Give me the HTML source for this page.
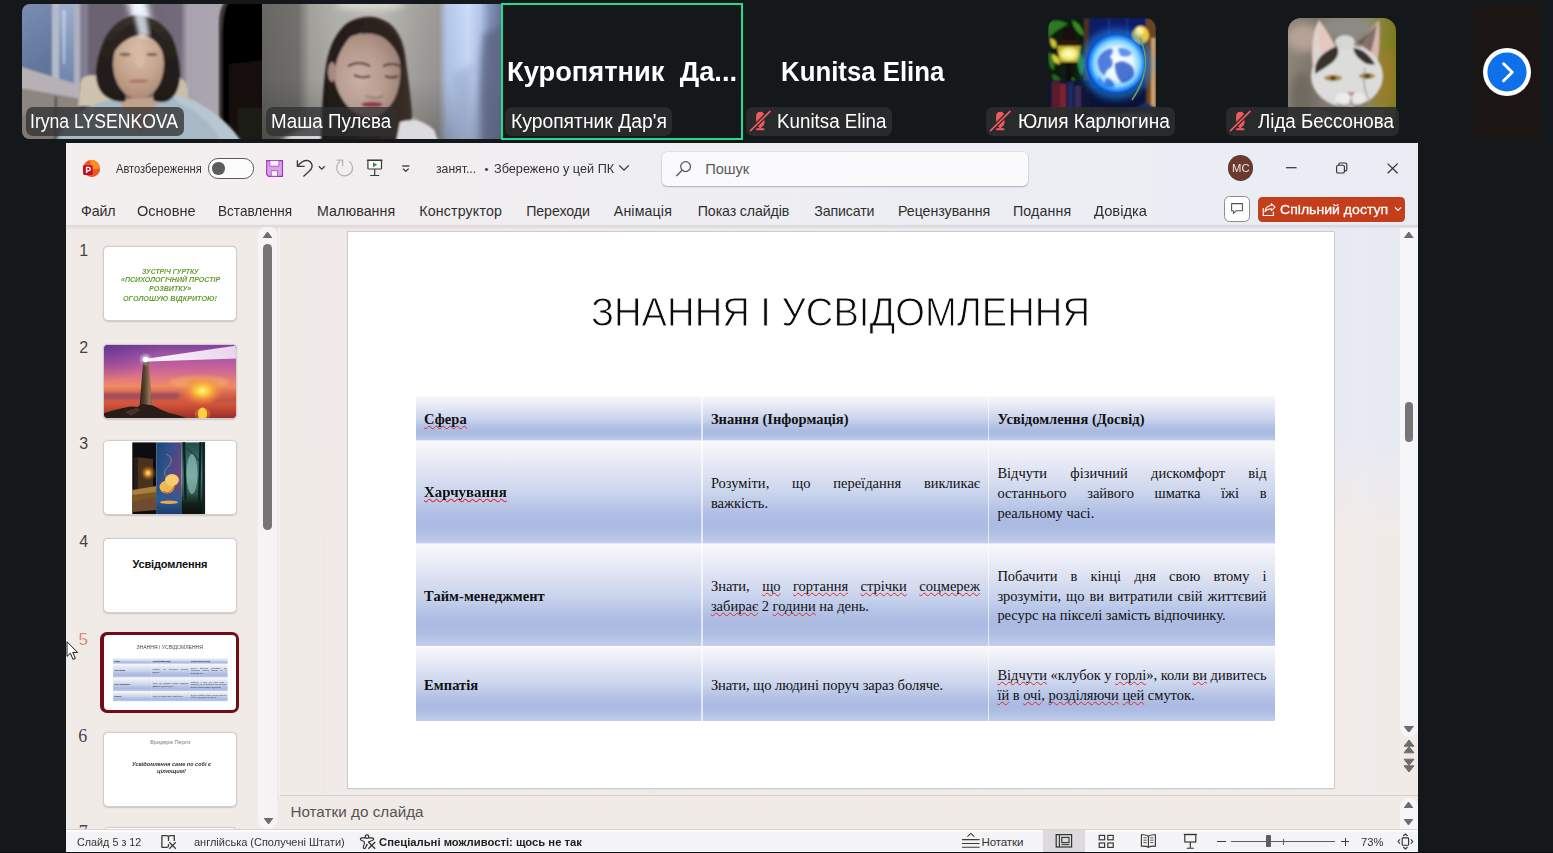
<!DOCTYPE html>
<html lang="uk">
<head>
<meta charset="utf-8">
<title>Zoom Meeting</title>
<style>
*{box-sizing:border-box;margin:0;padding:0}
html,body{width:1553px;height:853px;overflow:hidden;background:#14181b;font-family:"Liberation Sans",sans-serif}
#root{position:absolute;left:0;top:0;width:1553px;height:853px;overflow:hidden;background:#14181b}
.abs{position:absolute}
.t{position:absolute;white-space:pre;line-height:1;transform-origin:0 50%}
.t u{text-decoration:underline wavy #e0282e;text-decoration-thickness:.55px;text-underline-offset:1.4px;text-decoration-skip-ink:none}
.lbl{position:absolute;top:106.5px;height:29.4px;border-radius:7px;background:rgba(48,48,49,.77)}
.thumb{position:absolute;left:103.3px;width:133.4px;height:75px;background:#fff;border:1px solid #d3cccc;border-radius:5px;overflow:hidden;box-shadow:0 .5px 1.5px rgba(80,60,60,.22)}
</style>
</head>
<body>
<div id="root">
<!-- ===== VIDEO STRIP ===== -->
<svg class="abs" style="left:22px;top:4px" width="240" height="135" viewBox="0 0 240 135">
<defs>
<filter id="b1" x="-10%" y="-10%" width="120%" height="120%"><feGaussianBlur stdDeviation="1.1"/></filter>
<filter id="b2" x="-10%" y="-10%" width="120%" height="120%"><feGaussianBlur stdDeviation="2.2"/></filter>
<filter id="b3" x="-20%" y="-20%" width="140%" height="140%"><feGaussianBlur stdDeviation="3.6"/></filter>
<clipPath id="c1"><path d="M9 0H240V135H9Q0 135 0 126V9Q0 0 9 0Z"/></clipPath>
<linearGradient id="w1" x1="0" x2="1"><stop offset="0" stop-color="#6a6371"/><stop offset=".45" stop-color="#6b6372"/><stop offset=".66" stop-color="#746c7c"/><stop offset=".69" stop-color="#a7a2ae"/><stop offset="1" stop-color="#b0abb7"/></linearGradient>
<linearGradient id="win" x1="0" y1="0" x2=".3" y2="1"><stop offset="0" stop-color="#7c90b6"/><stop offset="1" stop-color="#61759a"/></linearGradient>
<linearGradient id="win2" x1="0" y1="0" x2="0" y2="1"><stop offset="0" stop-color="#9fb1cf"/><stop offset=".5" stop-color="#8499bd"/><stop offset="1" stop-color="#6d84ab"/></linearGradient>
<radialGradient id="fc1" cx=".5" cy=".3" r=".75"><stop offset="0" stop-color="#d9bda8"/><stop offset=".55" stop-color="#c6a58f"/><stop offset="1" stop-color="#a98672"/></radialGradient>
<linearGradient id="hr1" x1="0" y1="0" x2="0" y2="1"><stop offset="0" stop-color="#3a332e"/><stop offset=".35" stop-color="#26211e"/><stop offset="1" stop-color="#1f1b18"/></linearGradient>
</defs>
<g clip-path="url(#c1)">
<rect width="240" height="135" fill="url(#w1)"/>
<g filter="url(#b1)">
<path d="M-4 -4 H31 V74 L-4 63Z" fill="url(#win)"/>
<path d="M30 -4 H37 V76 L30 74Z" fill="#b4b9cb"/>
<path d="M37 -4 H53 V81 L37 76Z" fill="url(#win2)"/>
<path d="M40 6 L44 6 L43 60 L41 60Z" fill="#c9d4e6" opacity=".7"/>
<path d="M52 -4 H58 V84 L52 81Z" fill="#aeb0c0"/>
<path d="M58 -4 H66 V90 L58 84Z" fill="#827d90"/>
<path d="M-4 62 L58 81 L58 95 L-4 84Z" fill="#b5b1b4"/>
<path d="M-4 84 L58 95 L58 140 L-4 140Z" fill="#8c8580"/>
<path d="M-4 110 L40 118 L40 140 L-4 140Z" fill="#7f7873"/>
<path d="M33 92 L35 92 L34 140 L32 140Z" fill="#4a4540"/>
<path d="M196 -4 H244 V140 H200 V28 Q200 6 207 -4Z" fill="#050505"/>
<path d="M207 60 L244 56 V140 H207Z" fill="#120f0c"/>
<path d="M216 104 H244 V140 H216Z" fill="#1f1b16"/>
<path d="M197 20 Q197 4 204 -4 L207 -4 Q200 8 200 28 V140 H197Z" fill="#3b3631"/>
</g>
<g filter="url(#b3)"><path d="M104 -8 L124 -8 L130 26 L114 30Z" fill="#f4f7ff"/></g>
<g filter="url(#b1)">
<path d="M58 82 Q58 71 70 71 Q84 72 88 80 L92 102 L56 102Z" fill="#cec4ae"/>
<path d="M152 74 Q164 72 166 86 L166 96 L150 98Z" fill="#c9bfa9"/>
<path d="M34 139 Q46 106 84 97 L150 92 Q166 92 178 100 Q206 116 220 139Z" fill="#a6b9c4"/>
<path d="M150 92 Q166 92 178 100 Q206 116 220 139 H200 Q186 112 158 100Z" fill="#b7c6d0"/>
<path d="M96 95 L117 132 L139 93Z" fill="#c2a18c"/>
<path d="M115 11 Q95 13 83 34 Q74 54 74 72 Q75 90 90 96 Q98 99 104 97 L100 70 L100 40 L130 38 L134 70 L131 96 Q138 100 146 97 Q158 90 158 70 Q157 50 150 33 Q138 13 115 11Z" fill="url(#hr1)"/>
<ellipse cx="116.500" cy="60" rx="25.5" ry="35" fill="url(#fc1)"/>
<path d="M91 50 Q92 30 106 22 Q114 18 118 24 Q128 20 138 32 Q142 42 142 52 Q136 34 120 31 Q102 32 91 50Z" fill="#2a2420"/>
<ellipse cx="118" cy="57" rx="5" ry="7" fill="#dcb9a3"/>
<ellipse cx="103" cy="50.500" rx="5.5" ry="1.7" fill="#66574a" opacity=".85"/>
<ellipse cx="130" cy="50.500" rx="5.5" ry="1.7" fill="#66574a" opacity=".85"/>
<ellipse cx="116.500" cy="77" rx="10" ry="2.1" fill="#b4776a"/>
</g>
<g filter="url(#b2)"><path d="M111 6 L123 6 L128 32 L117 34Z" fill="#e9f0fb" opacity=".8"/></g>
</g></svg>
<svg class="abs" style="left:262px;top:4px" width="240" height="135" viewBox="0 0 240 135">
<defs>
<linearGradient id="w2" x1="0" x2="1"><stop offset="0" stop-color="#696763"/><stop offset=".15" stop-color="#73716d"/><stop offset=".2" stop-color="#a3a19c"/><stop offset=".32" stop-color="#b3b1ac"/><stop offset=".5" stop-color="#b9b7b2"/><stop offset=".66" stop-color="#a3a19d"/><stop offset=".735" stop-color="#9b9a98"/><stop offset=".77" stop-color="#b4c7ea"/><stop offset=".86" stop-color="#cbdcf9"/><stop offset=".91" stop-color="#b3c5ea"/><stop offset=".95" stop-color="#8190b6"/><stop offset="1" stop-color="#67708d"/></linearGradient>
<linearGradient id="sh2" x1="0" y1="0" x2="0" y2="1"><stop offset="0" stop-color="#000" stop-opacity="0"/><stop offset=".55" stop-color="#000" stop-opacity=".04"/><stop offset="1" stop-color="#000" stop-opacity=".26"/></linearGradient>
<radialGradient id="fc2" cx=".4" cy=".55" r=".7"><stop offset="0" stop-color="#c9b0a6"/><stop offset=".6" stop-color="#b3978b"/><stop offset="1" stop-color="#96796e"/></radialGradient>
<linearGradient id="hr2" x1="0" x2="1"><stop offset="0" stop-color="#1e1815"/><stop offset=".6" stop-color="#2c231f"/><stop offset="1" stop-color="#3a2f2a"/></linearGradient>
</defs>
<rect width="240" height="135" fill="url(#w2)"/>
<rect width="240" height="135" fill="url(#sh2)"/>
<g filter="url(#b3)">
<ellipse cx="108" cy="0" rx="34" ry="7" fill="#d6d5cf"/>
<path d="M222 30 Q214 80 220 140 L244 140 L244 20Z" fill="#5d6682" opacity=".8"/>
<path d="M190 70 Q198 100 192 140 L214 140 Q206 100 212 60Z" fill="#93a5cc" opacity=".55"/>
</g>
<g filter="url(#b2)">
<path d="M16 139 Q50 112 100 110 L140 112 Q168 118 176 139Z" fill="#d8d5d7"/>
</g>
<g filter="url(#b1)">
<path d="M59 139 Q60 96 63 70 Q66 36 84 20 Q100 10 116 14 Q138 20 143 50 Q147 78 150 108 Q150 124 146 139Z" fill="url(#hr2)"/>
<path d="M70 60 Q72 40 90 32 Q104 26 118 30 Q134 36 138 58 Q140 80 132 96 Q122 112 108 114 Q92 112 82 98 Q72 84 70 60Z" fill="url(#fc2)"/>
<path d="M66 84 Q62 44 88 23 Q98 17 104 17 Q92 27 84 38 Q76 50 74 60 Q71 70 71 86Z" fill="#261e1a"/>
<path d="M104 17 Q126 18 136 36 Q142 50 141 66 Q136 44 122 34 Q112 28 100 30Z" fill="#2b221e"/>
<ellipse cx="70" cy="68" rx="4" ry="10" fill="#a88a7e"/>
<path d="M86 62 Q97 56 108 62" stroke="#4b3b34" stroke-width="2.1" fill="none"/>
<path d="M121 62 Q130 58 138 62" stroke="#4b3b34" stroke-width="2.1" fill="none"/>
<path d="M92 71 Q100 75 108 72" stroke="#4a3932" stroke-width="2" fill="none"/>
<path d="M123 72 Q130 75 136 72" stroke="#4a3932" stroke-width="2" fill="none"/>
<ellipse cx="113" cy="88" rx="6" ry="5" fill="#c0a397"/>
<path d="M104 92 Q113 96 121 92" stroke="#8e7266" stroke-width="1.4" fill="none"/>
<ellipse cx="110" cy="100.500" rx="10.5" ry="2.7" fill="#8c3b4d"/>
<path d="M138 118 Q156 112 172 126 L176 139 H134Z" fill="#dddbdd"/>
</g>
</svg>
<div class="lbl" style="left:25.7px;width:158.3px"></div><span class="t" style="left:30.4px;top:111.0px;font-size:20px;color:#fff;transform:scaleX(0.8798);">Iryna LYSENKOVA</span><div class="lbl" style="left:266px;width:130px"></div><span class="t" style="left:270.6px;top:111.0px;font-size:20px;color:#fff;transform:scaleX(0.9377);">Маша Пулєва</span><div class="abs" style="left:500.7px;top:3px;width:242.6px;height:137px;border:2.9px solid #23dc8c"></div><span class="t" style="left:506.8px;top:57.7px;font-size:28px;font-weight:700;color:#fff;transform:scaleX(0.9748);">Куропятник&nbsp; Да...</span><div class="lbl" style="left:505.4px;width:166.3px"></div><span class="t" style="left:510.6px;top:111.0px;font-size:20px;color:#fff;transform:scaleX(0.9655);">Куропятник Дар'я</span><span class="t" style="left:780.7px;top:57.7px;font-size:28px;font-weight:700;color:#fff;transform:scaleX(0.9211);">Kunitsa Elina</span><div class="lbl" style="left:745.9px;width:145.8px"></div><svg class="abs" style="left:748.9px;top:110px" width="24" height="22" viewBox="0 0 24 22">
<rect x="7.1" y="1.8" width="8.4" height="15.2" rx="4.2" fill="#f25a5f"/>
<rect x="10.2" y="16" width="2.2" height="2.6" fill="#f25a5f"/>
<rect x="7.1" y="18.3" width="8.2" height="1.9" rx=".5" fill="#f25a5f"/>
<path d="M1.6 20.6 L21 1.3" stroke="#26282a" stroke-width="4.2"/>
<path d="M1.6 20.6 L21 1.3" stroke="#f25a5f" stroke-width="1.7" stroke-linecap="round"/>
</svg><span class="t" style="left:777.3px;top:111.0px;font-size:20px;color:#fff;transform:scaleX(0.9379);">Kunitsa Elina</span><svg class="abs" style="left:1048px;top:18px" width="108" height="108" viewBox="0 0 108 108">
<defs>
<clipPath id="c5"><rect width="108" height="108" rx="11"/></clipPath>
<radialGradient id="gl5" cx=".52" cy=".5" r=".5"><stop offset="0" stop-color="#ffffff"/><stop offset=".55" stop-color="#e4f6ff"/><stop offset=".78" stop-color="#7fd0ff"/><stop offset=".92" stop-color="#1f86f5"/><stop offset="1" stop-color="#0b4fd0"/></radialGradient>
<radialGradient id="la5" cx=".5" cy=".5" r=".5"><stop offset="0" stop-color="#fffde0"/><stop offset=".6" stop-color="#f4ee7a"/><stop offset="1" stop-color="#b7a92a"/></radialGradient>
<filter id="f5"><feGaussianBlur stdDeviation="1.1"/></filter>
<filter id="f5b"><feGaussianBlur stdDeviation="3"/></filter>
</defs>
<g clip-path="url(#c5)">
<rect width="108" height="108" fill="#0a123a"/>
<g filter="url(#f5)">
<rect x="42" y="0" width="60" height="70" fill="#0c1c66"/>
<rect x="60" y="0" width="2" height="60" fill="#1c2f86"/><rect x="78" y="0" width="2" height="60" fill="#1c2f86"/>
<rect x="36" y="0" width="5" height="108" fill="#4a3020"/>
<rect x="0" y="0" width="36" height="62" fill="#0d1a10"/>
<path d="M0 4 Q10 0 20 6 Q8 12 0 20Z" fill="#2f7a22"/><path d="M24 2 Q34 6 36 18 Q26 14 24 2Z" fill="#3a8a26"/>
<path d="M0 34 Q8 38 6 52 Q0 50 0 34Z" fill="#2d7a20"/><path d="M30 34 Q40 40 34 58 Q28 50 30 34Z" fill="#2f8a24"/>
<path d="M4 56 Q14 58 16 72 Q6 70 4 56Z" fill="#2a6a1e"/><path d="M22 58 Q32 62 30 76 Q22 70 22 58Z" fill="#33801f"/>
<path d="M2 20 Q10 22 8 30 Q2 30 2 20Z" fill="#d0c43a"/><path d="M4 36 Q12 38 12 46 Q4 46 4 36Z" fill="#d8cc40"/>
<rect x="0" y="62" width="42" height="46" fill="#0e1230"/>
<rect x="4" y="64" width="8" height="44" fill="#5a1a2a"/><rect x="12" y="66" width="6" height="42" fill="#7a2430"/><rect x="20" y="64" width="5" height="44" fill="#1a2a6a"/><rect x="27" y="68" width="6" height="40" fill="#3a2a5a"/>
<rect x="98" y="0" width="10" height="108" fill="#6a4522"/><rect x="103" y="20" width="5" height="80" fill="#c9a06a"/>
<path d="M12 22 L30 22 L32 28 L10 28Z" fill="#2a1410"/><path d="M16 12 Q21 6 26 12 L28 22 L14 22Z" fill="#1a0d0a"/>
<path d="M9 28 L33 28 L30 44 L12 44Z" fill="url(#la5)"/>
<rect x="18" y="44" width="6" height="20" fill="#10100c"/>
<path d="M84 16 Q90 4 98 10 Q104 18 98 24 Q92 28 86 24Z" fill="#f5c93a"/><path d="M88 10 Q94 6 96 14 Q92 20 88 16Z" fill="#fff2a0"/>
<path d="M48 90 Q70 102 98 84 L108 90 L108 108 L40 108Z" fill="#14306a"/>
<rect x="42" y="98" width="30" height="8" fill="#7aa0c8"/><rect x="74" y="96" width="30" height="10" fill="#90b0d0"/>
<path d="M62 104 L70 96 L78 104Z" fill="#c9a030"/>
</g>
<circle cx="68" cy="46" r="36" fill="#1d8cf5" opacity=".55" filter="url(#f5b)"/>
<path d="M92 20 Q106 50 84 82" fill="none" stroke="#7a9a50" stroke-width="1.6"/>
<circle cx="67.600" cy="45.500" r="29.5" fill="url(#gl5)"/>
<g filter="url(#f5)" opacity=".72" transform="translate(10,8) scale(.86)">
<path d="M46 40 Q50 28 62 26 Q66 30 60 36 Q66 40 62 48 Q56 50 54 58 Q46 52 46 40Z" fill="#1450d2"/>
<path d="M66 44 Q74 38 82 44 Q90 48 88 58 Q82 66 74 66 Q66 58 66 44Z" fill="#0f3fc0"/>
<path d="M56 60 Q64 62 66 70 Q60 74 54 68Z" fill="#1a55d8"/>
<path d="M70 26 Q80 24 86 32 Q80 38 72 34Z" fill="#2a6ae8"/>
<path d="M48 58 Q52 66 60 72 Q52 72 46 64Z" fill="#2a78f0"/>
</g>
</g></svg>
<div class="abs" style="left:1048px;top:106.5px;width:108px;height:20px;background:rgba(20,24,27,.6)"></div><div class="lbl" style="left:985.8px;width:189.4px"></div><svg class="abs" style="left:988.8px;top:110px" width="24" height="22" viewBox="0 0 24 22">
<rect x="7.1" y="1.8" width="8.4" height="15.2" rx="4.2" fill="#f25a5f"/>
<rect x="10.2" y="16" width="2.2" height="2.6" fill="#f25a5f"/>
<rect x="7.1" y="18.3" width="8.2" height="1.9" rx=".5" fill="#f25a5f"/>
<path d="M1.6 20.6 L21 1.3" stroke="#26282a" stroke-width="4.2"/>
<path d="M1.6 20.6 L21 1.3" stroke="#f25a5f" stroke-width="1.7" stroke-linecap="round"/>
</svg><span class="t" style="left:1017.6px;top:111.0px;font-size:20px;color:#fff;transform:scaleX(0.9543);">Юлия Карлюгина</span><svg class="abs" style="left:1288px;top:18px" width="108" height="108" viewBox="0 0 108 108">
<defs>
<clipPath id="c6"><rect width="108" height="108" rx="13"/></clipPath>
<linearGradient id="bg6" x1="0" x2="1"><stop offset="0" stop-color="#8f8579"/><stop offset=".25" stop-color="#7d766c"/><stop offset=".62" stop-color="#8b867c"/><stop offset=".84" stop-color="#8a8438"/><stop offset="1" stop-color="#7a7c1c"/></linearGradient>
<filter id="f6"><feGaussianBlur stdDeviation="1.2"/></filter>
<filter id="f6b"><feGaussianBlur stdDeviation="4"/></filter>
</defs>
<g clip-path="url(#c6)">
<rect width="108" height="108" fill="url(#bg6)"/>
<g filter="url(#f6b)">
<ellipse cx="16" cy="20" rx="18" ry="14" fill="#b5a396"/>
<ellipse cx="60" cy="10" rx="30" ry="10" fill="#8d8b86"/>
<ellipse cx="98" cy="60" rx="10" ry="30" fill="#a07a2a" opacity=".7"/>
<ellipse cx="14" cy="80" rx="12" ry="26" fill="#6f6a60"/>
</g>
<g filter="url(#f6)" transform="translate(-1,-10)">
<path d="M26 62 Q22 30 32 12 Q44 28 50 42Z" fill="#e7c6bf"/>
<path d="M72 42 Q82 22 92 12 Q94 34 90 58Z" fill="#d8b6b0"/>
<path d="M28 60 Q24 34 32 12 Q30 36 36 50Z" fill="#d9d6d2"/>
<ellipse cx="60" cy="68" rx="36" ry="31" fill="#dcdcda"/>
<ellipse cx="58" cy="34" rx="10" ry="7" fill="#d6d6d4"/>
<path d="M28 60 Q30 46 50 38 Q54 46 46 54 Q38 60 28 66Z" fill="#37302b"/>
<path d="M66 40 Q78 40 88 56 Q80 58 74 52 Q68 48 66 40Z" fill="#3a332e"/>
<path d="M70 34 Q80 28 90 16 Q88 30 84 44Z" fill="#4a403b" opacity=".6"/>
<ellipse cx="46" cy="70" rx="9" ry="3" fill="#a9873a"/><ellipse cx="46" cy="70" rx="3" ry="2.6" fill="#5a4520"/>
<ellipse cx="80" cy="68" rx="8" ry="3" fill="#a9873a"/><ellipse cx="80" cy="68" rx="3" ry="2.6" fill="#5a4520"/>
<path d="M60 84 L68 84 L64 90Z" fill="#b99088"/>
<path d="M64 90 V96 M50 96 Q58 100 64 96 Q70 100 80 94" stroke="#6a605a" stroke-width="1.2" fill="none"/>
<path d="M78 60 Q74 80 84 96 Q78 104 72 108" stroke="#8a8680" stroke-width="1" fill="none"/>
<ellipse cx="56" cy="90" rx="8" ry="5" fill="#ececea"/><ellipse cx="72" cy="90" rx="7" ry="5" fill="#e8e8e6"/>
<path d="M24 100 Q60 114 96 100 L100 120 L20 120Z" fill="#bdbab2"/>
</g>
</g></svg>
<div class="abs" style="left:1288px;top:106.5px;width:108px;height:20px;background:rgba(20,24,27,.6)"></div><div class="lbl" style="left:1226px;width:172.8px"></div><svg class="abs" style="left:1229px;top:110px" width="24" height="22" viewBox="0 0 24 22">
<rect x="7.1" y="1.8" width="8.4" height="15.2" rx="4.2" fill="#f25a5f"/>
<rect x="10.2" y="16" width="2.2" height="2.6" fill="#f25a5f"/>
<rect x="7.1" y="18.3" width="8.2" height="1.9" rx=".5" fill="#f25a5f"/>
<path d="M1.6 20.6 L21 1.3" stroke="#26282a" stroke-width="4.2"/>
<path d="M1.6 20.6 L21 1.3" stroke="#f25a5f" stroke-width="1.7" stroke-linecap="round"/>
</svg><span class="t" style="left:1257.5px;top:111.0px;font-size:20px;color:#fff;transform:scaleX(0.9351);">Ліда Бессонова</span><div class="abs" style="left:1474px;top:4px;width:66px;height:135px;background:#1b1614"></div><svg class="abs" style="left:1481px;top:46px" width="52" height="52" viewBox="0 0 52 52"><circle cx="26" cy="26" r="24" fill="#fff"/><circle cx="26" cy="26" r="19.6" fill="#0e71eb"/><path d="M22.6 17.8 L31.2 26.2 L22.6 34.8" fill="none" stroke="#fff" stroke-width="3" stroke-linecap="round" stroke-linejoin="round"/></svg><!-- ===== POWERPOINT WINDOW CHROME ===== -->
<div class="abs" id="win" style="left:66px;top:143px;width:1352px;height:710px;background:#f1ebe8"></div><div class="abs" style="left:66px;top:143px;width:1352px;height:84px;background:linear-gradient(90deg,#f4efef 0%,#f2eeef 22%,#efeef2 42%,#eceef4 72%,#e9ecf3 100%)"></div><div class="abs" style="left:66px;top:224px;width:1352px;height:6px;background:linear-gradient(180deg,rgba(110,100,110,0) 0%,rgba(110,100,110,.05) 18%,rgba(110,100,110,.2) 30%,rgba(110,100,110,.1) 50%,rgba(110,100,110,.03) 80%,rgba(110,100,110,0) 100%)"></div><svg class="abs" style="left:81px;top:158px" width="22" height="22" viewBox="0 0 22 22">
<circle cx="10.5" cy="10.4" r="8.5" fill="#ee4e2a"/>
<path d="M9.4 1.97 A8.5 8.5 0 0 1 19 10.4 L15 12.4 L9.4 9.4Z" fill="#ff8f1f"/>
<path d="M19 10.4 A8.5 8.5 0 0 1 10.5 18.9 L10.5 12 L15 11Z" fill="#f0552a"/>
<rect x="2.1" y="7.2" width="9.5" height="9.7" rx="1.1" fill="#c10f22"/>
<path d="M5.6 14.9 V9.4 H7.5 Q9.3 9.4 9.3 11.1 Q9.3 12.8 7.5 12.8 H5.9" fill="none" stroke="#fff" stroke-width="1.35"/>
</svg><span class="t" style="left:115.6px;top:162.6px;font-size:12px;color:#333;transform:scaleX(0.9270);">Автозбереження</span><div class="abs" style="left:208.4px;top:158.4px;width:45.4px;height:20.2px;border:1.1px solid #5a5a5c;border-radius:10.1px;background:#fdfcfd"></div><div class="abs" style="left:212.2px;top:162.3px;width:12.4px;height:12.4px;border-radius:50%;background:#5c5b5e"></div><svg class="abs" style="left:265px;top:159px" width="20" height="20" viewBox="0 0 20 20">
<path d="M1.7 1.6 H17.5 V17.4 H3.6 L1.7 15.5Z" fill="#d9a2e3" stroke="#9f2fbe" stroke-width="1.1"/>
<rect x="4.9" y="1.7" width="9" height="5.4" fill="#fbf6fc" stroke="#a849c4" stroke-width=".8"/>
<rect x="6.2" y="11.8" width="6.4" height="5.4" fill="#fbf6fc" stroke="#a849c4" stroke-width=".8"/>
</svg><svg class="abs" style="left:295px;top:158px" width="32" height="21" viewBox="0 0 32 21">
<path d="M2.4 2.2 V8.4 H9.6" fill="none" stroke="#3b3b3d" stroke-width="1.35"/>
<path d="M2.6 8.2 Q8 1.6 13 2.6 Q17.6 4.2 17 9 Q16.4 11.6 13.6 13.8 L8.4 18.6" fill="none" stroke="#3b3b3d" stroke-width="1.35"/>
<path d="M23.8 8.3 L26.8 11.2 L29.8 8.3" fill="none" stroke="#3b3b3d" stroke-width="1.3"/>
</svg><svg class="abs" style="left:334px;top:158px" width="22" height="21" viewBox="0 0 22 21">
<path d="M15.2 3.3 A8 8 0 1 1 6.2 3.2" fill="none" stroke="#b4b3b6" stroke-width="1.3"/>
<path d="M2.6 2.2 H8.6 V8.2" fill="none" stroke="#b4b3b6" stroke-width="1.3"/>
</svg><svg class="abs" style="left:366px;top:159px" width="18" height="18" viewBox="0 0 18 18">
<path d="M0.8 1.2 H16.6" stroke="#3b3b3d" stroke-width="1.2"/>
<rect x="1.9" y="1.4" width="13.6" height="8.6" rx=".8" fill="#fbfafb" stroke="#3b3b3d" stroke-width="1.2"/>
<path d="M7 3.2 L11.2 5.7 L7 8.2Z" fill="#1f9a3a"/>
<path d="M8.7 10 V16.4 M4.2 16.5 H13.2" stroke="#3b3b3d" stroke-width="1.2"/>
</svg><svg class="abs" style="left:401px;top:163px" width="10" height="11" viewBox="0 0 10 11"><path d="M1.2 3 H8.4" stroke="#333" stroke-width="1.3"/><path d="M2 5.6 L4.8 8.4 L7.6 5.6" fill="none" stroke="#333" stroke-width="1.3"/></svg><span class="t" style="left:435.9px;top:162.2px;font-size:13px;color:#333;transform:scaleX(0.9384);">занят...</span><span class="t" style="left:484.4px;top:163.9px;font-size:11px;color:#333;">•</span><span class="t" style="left:494.3px;top:161.9px;font-size:13.3px;color:#333;transform:scaleX(0.9545);">Збережено у цей ПК</span><svg class="abs" style="left:618px;top:163px" width="12" height="10" viewBox="0 0 12 10"><path d="M1.2 2.4 L6 7.2 L10.8 2.4" fill="none" stroke="#333" stroke-width="1.3"/></svg><div class="abs" style="left:661.5px;top:151.5px;width:366px;height:34px;border-radius:5px;background:#faf9fc;box-shadow:0 1px 1.5px rgba(90,80,100,.35),0 0 0 .6px rgba(120,110,130,.18)"></div><svg class="abs" style="left:675px;top:160px" width="18" height="18" viewBox="0 0 18 18"><circle cx="10.6" cy="6.6" r="4.9" fill="none" stroke="#555" stroke-width="1.25"/><path d="M7.2 10.2 L1.4 16" stroke="#555" stroke-width="1.3"/></svg><span class="t" style="left:705.2px;top:161.5px;font-size:14.7px;color:#5a5a5a;letter-spacing:-0.053px;">Пошук</span><div class="abs" style="left:1227.8px;top:155.4px;width:25.4px;height:25.4px;border-radius:50%;background:#6a392f"></div><span class="t" style="left:1231.8px;top:163.4px;font-size:10.5px;color:#f0e4e0;transform:scaleX(1.0741);">MC</span><svg class="abs" style="left:1280px;top:158px" width="124" height="20" viewBox="0 0 124 20">
<path d="M6 9.7 H16.6" stroke="#333" stroke-width="1.2"/>
<rect x="56.6" y="7.2" width="7.8" height="7.8" rx="1.6" fill="none" stroke="#333" stroke-width="1.15"/>
<path d="M58.8 7 V6.4 Q58.8 5 60.2 5 H65.2 Q66.8 5 66.8 6.6 V11.4 Q66.8 12.8 65.4 12.8 H64.6" fill="none" stroke="#333" stroke-width="1.15"/>
<path d="M107.6 5.6 L117.6 15.2 M117.6 5.6 L107.6 15.2" stroke="#333" stroke-width="1.25"/>
</svg><span class="t" style="left:81.0px;top:203.7px;font-size:14.2px;color:#2e2e2e;letter-spacing:-0.107px;">Файл</span><span class="t" style="left:137.1px;top:203.7px;font-size:14.2px;color:#2e2e2e;transform:scaleX(1.0252);">Основне</span><span class="t" style="left:218.4px;top:203.7px;font-size:14.2px;color:#2e2e2e;transform:scaleX(0.9565);">Вставлення</span><span class="t" style="left:317.0px;top:203.7px;font-size:14.2px;color:#2e2e2e;letter-spacing:0.093px;">Малювання</span><span class="t" style="left:419.2px;top:203.7px;font-size:14.2px;color:#2e2e2e;letter-spacing:0.178px;">Конструктор</span><span class="t" style="left:526.2px;top:203.7px;font-size:14.2px;color:#2e2e2e;letter-spacing:-0.090px;">Переходи</span><span class="t" style="left:613.8px;top:203.7px;font-size:14.2px;color:#2e2e2e;letter-spacing:0.137px;">Анімація</span><span class="t" style="left:697.8px;top:203.7px;font-size:14.2px;color:#2e2e2e;letter-spacing:-0.122px;">Показ слайдів</span><span class="t" style="left:814.2px;top:203.7px;font-size:14.2px;color:#2e2e2e;letter-spacing:-0.126px;">Записати</span><span class="t" style="left:898.0px;top:203.7px;font-size:14.2px;color:#2e2e2e;letter-spacing:-0.027px;">Рецензування</span><span class="t" style="left:1013.0px;top:203.7px;font-size:14.2px;color:#2e2e2e;letter-spacing:0.150px;">Подання</span><span class="t" style="left:1093.6px;top:203.7px;font-size:14.2px;color:#2e2e2e;transform:scaleX(1.0375);">Довідка</span><div class="abs" style="left:1224.2px;top:196.3px;width:25.6px;height:25.4px;border:1px solid #8f8d90;border-radius:5.5px;background:#fefefe"></div><svg class="abs" style="left:1229px;top:201px" width="17" height="17" viewBox="0 0 17 17"><path d="M2.6 2.6 H13.4 V9.8 H7 L4.4 12.4 V9.8 H2.6Z" fill="none" stroke="#505050" stroke-width="1.05" stroke-linejoin="round"/></svg><div class="abs" style="left:1258px;top:196.6px;width:147px;height:25px;border-radius:4.5px;background:#c43e1c"></div><svg class="abs" style="left:1262px;top:200px" width="15" height="17" viewBox="0 0 15 17">
<path d="M1.2 8 V15.5 H11.4 V11.4" fill="none" stroke="#fff" stroke-width="1.15"/>
<path d="M9.3 3.6 L13 7.2 L9.3 10.6 V8.7 Q5.4 8.5 3 11.6 Q3.6 6 9.3 5.6Z" fill="none" stroke="#fff" stroke-width="1.05" stroke-linejoin="round"/>
</svg><span class="t" style="left:1279.6px;top:203.0px;font-size:13.6px;color:#fff;transform:scaleX(1.0352);-webkit-text-stroke:.28px #fff;">Спільний доступ</span><svg class="abs" style="left:1393px;top:205px" width="10" height="8" viewBox="0 0 10 8"><path d="M2 2.4 L5 5.4 L8 2.4" fill="none" stroke="#fff" stroke-width="1.2"/></svg><div class="abs" style="left:279.5px;top:228px;width:1120.5px;height:567.4px;background:linear-gradient(180deg,rgba(231,234,243,1) 0%,rgba(231,234,243,1) 36%,rgba(240,233,230,0) 54%),#f1ebe8;-webkit-mask-image:linear-gradient(90deg,transparent 0%,#000 100%)"></div><!-- ===== THUMBNAIL PANEL ===== -->
<div class="abs" style="left:258.4px;top:227.4px;width:18.4px;height:601.6px;border-radius:7px 7px 9px 9px;background:#f6f3f5"></div><div class="abs" style="left:278.6px;top:228px;width:1.2px;height:567px;background:#f7f2f1"></div><svg class="abs" style="left:262.5px;top:231.5px" width="9" height="6" viewBox="0 0 9 6"><polygon points="0,6 4.5,0 9,6" fill="#6f6c6e" stroke="#6f6c6e" stroke-width="1" stroke-linejoin="round"/></svg><div class="abs" style="left:263.2px;top:244px;width:8.6px;height:285.6px;border-radius:4.3px;background:#777476"></div><svg class="abs" style="left:263.5px;top:818px" width="9" height="6" viewBox="0 0 9 6"><polygon points="0,0 4.5,6 9,0" fill="#6f6c6e" stroke="#6f6c6e" stroke-width="1" stroke-linejoin="round"/></svg><span class="t" style="left:79.3px;top:242.5px;font-size:16px;color:#444;">1</span><span class="t" style="left:79.3px;top:339.7px;font-size:16px;color:#444;">2</span><span class="t" style="left:79.3px;top:436.4px;font-size:16px;color:#444;">3</span><span class="t" style="left:79.3px;top:533.6px;font-size:16px;color:#444;">4</span><span class="t" style="left:78.4px;top:630.5px;font-size:17px;color:#d4532f;-webkit-text-stroke:.45px #f1ebe8;">5</span><span class="t" style="left:78.3px;top:726.8px;font-size:18px;font-family:'Liberation Serif',serif;color:#4a4644;">6</span><span class="t" style="left:78.8px;top:822.5px;font-size:18px;font-family:'Liberation Serif',serif;color:#4a4a4a;">7</span><div class="thumb" style="top:246.4px;background:#fff"></div><span class="t" style="left:141.6px;top:267.5px;font-size:8px;font-weight:700;color:#64a032;transform:scaleX(0.8505);font-style:italic;">ЗУСТРІЧ ГУРТКУ</span><span class="t" style="left:120.6px;top:276.2px;font-size:8px;font-weight:700;color:#64a032;transform:scaleX(0.8828);font-style:italic;">«ПСИХОЛОГІЧНИЙ ПРОСТІР</span><span class="t" style="left:148.7px;top:284.8px;font-size:8px;font-weight:700;color:#64a032;transform:scaleX(0.8826);font-style:italic;">РОЗВИТКУ»</span><span class="t" style="left:123.1px;top:294.7px;font-size:8px;font-weight:700;color:#64a032;transform:scaleX(0.8986);font-style:italic;">ОГОЛОШУЮ ВІДКРИТОЮ!</span><div class="thumb" style="top:343.6px;background:#7a429c"><svg width="133" height="75" viewBox="0 0 133 75" style="display:block;margin:-1px">
<defs>
<linearGradient id="sk" x1="0" y1="0" x2="0" y2="1"><stop offset="0" stop-color="#7a429c"/><stop offset=".16" stop-color="#a656a4"/><stop offset=".32" stop-color="#c8629a"/><stop offset=".46" stop-color="#e27880"/><stop offset=".56" stop-color="#ee8c62"/><stop offset=".68" stop-color="#d4604a"/><stop offset=".8" stop-color="#d2563c"/><stop offset=".9" stop-color="#b8402f"/><stop offset="1" stop-color="#8e2c2c"/></linearGradient>
<radialGradient id="skl" cx="0" cy="0" r=".75"><stop offset="0" stop-color="#5a2f8c" stop-opacity=".7"/><stop offset="1" stop-color="#5a2f8c" stop-opacity="0"/></radialGradient>
<radialGradient id="sun" cx=".5" cy=".5" r=".5"><stop offset="0" stop-color="#fffbe0"/><stop offset=".1" stop-color="#ffe866"/><stop offset=".32" stop-color="#fdc43c"/><stop offset=".62" stop-color="#f79a3c" stop-opacity=".65"/><stop offset="1" stop-color="#f0803c" stop-opacity="0"/></radialGradient>
<linearGradient id="beam" x1="0" x2="1"><stop offset="0" stop-color="#fff" stop-opacity=".95"/><stop offset="1" stop-color="#f2e2f4" stop-opacity=".9"/></linearGradient>
<linearGradient id="lh" x1="0" x2="1"><stop offset="0" stop-color="#2e2019"/><stop offset=".45" stop-color="#5c4433"/><stop offset=".8" stop-color="#967558"/><stop offset="1" stop-color="#7a5c44"/></linearGradient>
<filter id="tb"><feGaussianBlur stdDeviation=".7"/></filter>
<filter id="tb2"><feGaussianBlur stdDeviation="1.6"/></filter>
</defs>
<rect width="133" height="75" fill="url(#sk)"/>
<rect width="80" height="50" fill="url(#skl)"/>
<g filter="url(#tb2)">
<rect x="-2" y="49" width="78" height="6" fill="#8a4666" opacity=".7"/>
<rect x="110" y="54" width="26" height="4" fill="#b2503e" opacity=".6"/>
<ellipse cx="96" cy="38" rx="30" ry="6" fill="#f5b060" opacity=".55"/>
</g>
<ellipse cx="99.400" cy="46.600" rx="22" ry="15" fill="url(#sun)"/>
<g filter="url(#tb)">
<ellipse cx="99.500" cy="70" rx="4.600" ry="6.500" fill="#ffe23e" filter="url(#tb)"/>
<ellipse cx="99.500" cy="70" rx="8" ry="6" fill="#f7a83a" opacity=".3"/>
<path d="M45 14.500 L134 1.500 L134 14.500 L45 17.500Z" fill="url(#beam)"/>
<path d="M40 19.500 H46 L49 62.500 H36.500Z" fill="url(#lh)"/>
<rect x="39.600" y="17.500" width="6.800" height="2.600" fill="#3a2c28"/>
<path d="M-1 76 L-1 70 Q10 66 20 64 Q28 61.500 34 63 L40 60 L50 61.500 Q58 66 66 69 Q78 71 87 76Z" fill="#2b1b19"/>
<path d="M22 68 L34 63.500 L38 66 L28 72Z" fill="#5a4238" opacity=".6"/>
</g>
<circle cx="42.600" cy="15.400" r="5" fill="#fff" opacity=".55" filter="url(#tb2)"/>
<circle cx="42.600" cy="15.400" r="2.700" fill="#fff" filter="url(#tb)"/>
</svg></div><div class="thumb" style="top:440.3px;background:#fff"><svg width="133" height="75" viewBox="0 0 133 75" style="display:block;margin:-1px">
<defs>
<radialGradient id="g3a" cx=".5" cy=".5" r=".5"><stop offset="0" stop-color="#fff3c0"/><stop offset=".22" stop-color="#f0a838"/><stop offset=".6" stop-color="#8a5420" stop-opacity=".7"/><stop offset="1" stop-color="#3a2414" stop-opacity="0"/></radialGradient>
<linearGradient id="g3b" x1="0" y1="0" x2="1" y2=".6"><stop offset="0" stop-color="#17487a"/><stop offset=".45" stop-color="#34508a"/><stop offset="1" stop-color="#7e3e7c"/></linearGradient>
<linearGradient id="g3b2" x1="0" y1="0" x2="0" y2="1"><stop offset=".55" stop-color="#2a5a90" stop-opacity="0"/><stop offset=".8" stop-color="#2c5c94"/><stop offset="1" stop-color="#1a3a6c"/></linearGradient>
<linearGradient id="g3c" x1="0" y1="0" x2="0" y2="1"><stop offset="0" stop-color="#234a4c"/><stop offset=".45" stop-color="#4e8480"/><stop offset=".72" stop-color="#2c5044"/><stop offset=".85" stop-color="#13201a"/><stop offset="1" stop-color="#0a0f0d"/></linearGradient>
</defs>
<rect width="133" height="75" fill="#fff"/>
<rect x="29.300" y="2.400" width="24" height="72" fill="#0d0c10"/>
<g filter="url(#tb)">
<path d="M33 17 L50 19 L50 50 L33 52Z" fill="#4a301e"/><path d="M31 17 H35 V52 H31Z" fill="#2a1c14"/>
<path d="M29.300 50 L53.300 46 V56 L29.300 60Z" fill="#a8803e"/><path d="M29.300 55 L53.300 52 V58 L29.300 63Z" fill="#7a5828"/>
<path d="M29.300 62 L53.300 57 V70 L29.300 72Z" fill="#6e4c30"/>
<circle cx="45" cy="33" r="9" fill="url(#g3a)"/>
</g>
<rect x="53.300" y="2.400" width="25" height="72" fill="url(#g3b)"/><rect x="53.300" y="2.400" width="25" height="72" fill="url(#g3b2)"/>
<g filter="url(#tb)"><ellipse cx="66" cy="62.300" rx="9" ry="1.700" fill="#f2a648"/>
<ellipse cx="64" cy="47" rx="7.500" ry="6.500" fill="#f0b850"/><ellipse cx="69" cy="40" rx="7" ry="6" fill="#f6cc6e"/><path d="M60 51 Q66 56 72 46" stroke="#b8742c" stroke-width="1.200" fill="none"/>
<path d="M63 14 Q72 18 66 26 Q58 32 64 38" fill="none" stroke="#d8b088" stroke-width=".6" opacity=".8"/></g>
<rect x="78.300" y="2.400" width="23.800" height="72" fill="url(#g3c)"/>
<g filter="url(#tb)"><ellipse cx="89" cy="34" rx="5.500" ry="20" fill="#9ccabe" opacity=".6"/>
<path d="M81 2 L82.500 60 M97.500 2 L96 66 M100.600 2 L100.600 74" stroke="#0f2224" stroke-width="2.400"/><path d="M84 8 Q92 14 98 24" stroke="#163034" stroke-width="1" fill="none"/></g>
</svg></div><div class="thumb" style="top:537.5px;background:#fff"></div><span class="t" style="left:132.4px;top:559.3px;font-size:11px;font-weight:700;color:#111;letter-spacing:-0.129px;">Усвідомлення</span><div class="abs" style="left:100.4px;top:632px;width:138.8px;height:81px;border-radius:7px;background:#700c18"></div><div class="abs" style="left:103.5px;top:635.1px;width:132.6px;height:74.8px;border-radius:4px;background:#fff;overflow:hidden"><div style="position:absolute;left:.7px;top:.5px;width:985px;height:555px;transform-origin:0 0;transform:scale(.1334)"><span class="t" style="left:242.6px;top:60.0px;font-size:41.3px;color:#0c0c0c;transform:scaleX(0.9242);-webkit-text-stroke:.95px #fff;">ЗНАННЯ І УСВІДОМЛЕННЯ</span><div class="abs" style="left:67.7px;top:163.5px;width:859px;height:45.1px;background:linear-gradient(180deg,#f8f8fc 0%,#eeeff8 13%,#dde2f2 32%,#c8d3ec 52%,#b3c1e5 68%,#abbae2 79%,#afbee4 88%,#c2ceeb 100%)"></div><div class="abs" style="left:67.7px;top:208.6px;width:859px;height:103.0px;background:linear-gradient(180deg,#f8f8fc 0%,#eeeff8 13%,#dde2f2 32%,#c8d3ec 52%,#b3c1e5 68%,#abbae2 79%,#afbee4 88%,#c2ceeb 100%)"></div><div class="abs" style="left:67.7px;top:311.6px;width:859px;height:102.9px;background:linear-gradient(180deg,#f8f8fc 0%,#eeeff8 13%,#dde2f2 32%,#c8d3ec 52%,#b3c1e5 68%,#abbae2 79%,#afbee4 88%,#c2ceeb 100%)"></div><div class="abs" style="left:67.7px;top:414.5px;width:859px;height:74.1px;background:linear-gradient(180deg,#f8f8fc 0%,#eeeff8 13%,#dde2f2 32%,#c8d3ec 52%,#b3c1e5 68%,#abbae2 79%,#afbee4 88%,#c2ceeb 100%)"></div><div class="abs" style="left:353.3px;top:164.0px;width:1.4px;height:324.6px;background:rgba(255,255,255,.62)"></div><div class="abs" style="left:639.9px;top:164.0px;width:1.4px;height:324.6px;background:rgba(255,255,255,.62)"></div><div class="abs" style="left:67.7px;top:208.0px;width:859px;height:1.2px;background:rgba(255,255,255,.55)"></div><div class="abs" style="left:67.7px;top:311.0px;width:859px;height:1.2px;background:rgba(255,255,255,.55)"></div><div class="abs" style="left:67.7px;top:413.9px;width:859px;height:1.2px;background:rgba(255,255,255,.55)"></div><span class="t" style="left:76.1px;top:179.9px;font-size:14.5px;font-family:'Liberation Serif',serif;font-weight:700;color:#111;letter-spacing:0.099px;"><u>Сфера</u></span><span class="t" style="left:362.9px;top:179.9px;font-size:14.5px;font-family:'Liberation Serif',serif;font-weight:700;color:#111;letter-spacing:0.009px;">Знання (Інформація)</span><span class="t" style="left:649.4px;top:179.9px;font-size:14.5px;font-family:'Liberation Serif',serif;font-weight:700;color:#111;letter-spacing:0.016px;">Усвідомлення (Досвід)</span><span class="t" style="left:76.1px;top:253.2px;font-size:14.5px;font-family:'Liberation Serif',serif;font-weight:700;color:#111;transform:scaleX(1.0281);"><u>Харчування</u></span><span class="t" style="left:362.9px;top:244.4px;font-size:14.5px;font-family:'Liberation Serif',serif;color:#111;word-spacing:19.15px;">Розуміти, що переїдання викликає</span><span class="t" style="left:362.9px;top:264.3px;font-size:14.5px;font-family:'Liberation Serif',serif;color:#111;">важкість.</span><span class="t" style="left:649.4px;top:234.1px;font-size:14.5px;font-family:'Liberation Serif',serif;color:#111;word-spacing:19.58px;">Відчути фізичний дискомфорт від</span><span class="t" style="left:649.4px;top:254.1px;font-size:14.5px;font-family:'Liberation Serif',serif;color:#111;word-spacing:16.97px;">останнього зайвого шматка їжі в</span><span class="t" style="left:649.4px;top:273.9px;font-size:14.5px;font-family:'Liberation Serif',serif;color:#111;">реальному часі.</span><span class="t" style="left:76.1px;top:356.7px;font-size:14.5px;font-family:'Liberation Serif',serif;font-weight:700;color:#111;letter-spacing:0.033px;">Тайм-менеджмент</span><span class="t" style="left:362.9px;top:346.9px;font-size:14.5px;font-family:'Liberation Serif',serif;color:#111;word-spacing:8.82px;">Знати, <u>що</u> <u>гортання</u> <u>стрічки</u> <u>соцмереж</u></span><span class="t" style="left:362.9px;top:366.9px;font-size:14.5px;font-family:'Liberation Serif',serif;color:#111;"><u>забирає</u> 2 <u>години</u> на день.</span><span class="t" style="left:649.4px;top:337.0px;font-size:14.5px;font-family:'Liberation Serif',serif;color:#111;word-spacing:9.45px;">Побачити в кінці дня свою втому і</span><span class="t" style="left:649.4px;top:356.7px;font-size:14.5px;font-family:'Liberation Serif',serif;color:#111;word-spacing:1.35px;">зрозуміти, що ви витратили свій життєвий</span><span class="t" style="left:649.4px;top:376.4px;font-size:14.5px;font-family:'Liberation Serif',serif;color:#111;letter-spacing:-0.035px;">ресурс на пікселі замість відпочинку.</span><span class="t" style="left:76.1px;top:445.5px;font-size:14.5px;font-family:'Liberation Serif',serif;font-weight:700;color:#111;letter-spacing:0.054px;">Емпатія</span><span class="t" style="left:362.9px;top:445.5px;font-size:14.5px;font-family:'Liberation Serif',serif;color:#111;letter-spacing:-0.037px;">Знати, що людині поруч зараз боляче.</span><span class="t" style="left:649.4px;top:435.9px;font-size:14.5px;font-family:'Liberation Serif',serif;color:#111;word-spacing:-0.13px;"><u>Відчути</u> «клубок у <u>горлі</u>», коли <u>ви</u> дивитесь</span><span class="t" style="left:649.4px;top:455.7px;font-size:14.5px;font-family:'Liberation Serif',serif;color:#111;letter-spacing:-0.031px;"><u>їй</u> в <u>очі</u>, <u>розділяючи</u> <u>цей</u> смуток.</span></div></div><div class="thumb" style="top:732.2px;background:#fff"></div><span class="t" style="left:149.7px;top:740.0px;font-size:5.4px;color:#777;letter-spacing:0.070px;">Фридерік Перлз</span><span class="t" style="left:132.3px;top:760.9px;font-size:6px;font-weight:700;color:#333;transform:scaleX(0.9173);font-style:italic;">Усвідомлення саме по собі є</span><span class="t" style="left:157.4px;top:767.7px;font-size:6px;font-weight:700;color:#333;transform:scaleX(0.9593);font-style:italic;">цілющим!</span><div class="thumb" style="top:827.4px;height:10px;border-bottom:0;border-radius:5px 5px 0 0"></div><svg class="abs" style="left:66px;top:641px" width="14" height="20" viewBox="0 0 14 20"><path d="M1 .8 V15.4 L4.4 12.2 L7 18.4 L9.4 17.4 L6.8 11.4 H11.6Z" fill="#fff" stroke="#1a1a1a" stroke-width="1" stroke-linejoin="round"/></svg><div class="abs" style="left:347.5px;top:231.5px;width:986px;height:556px;background:#fff;box-shadow:0 0 0 1px #d0cbcb,0 1px 2px rgba(0,0,0,.10)"></div><span class="t" style="left:590.6px;top:292.0px;font-size:41.3px;color:#0c0c0c;transform:scaleX(0.9242);-webkit-text-stroke:.95px #fff;">ЗНАННЯ І УСВІДОМЛЕННЯ</span><div class="abs" style="left:415.7px;top:395.5px;width:859px;height:45.1px;background:linear-gradient(180deg,#f8f8fc 0%,#eeeff8 13%,#dde2f2 32%,#c8d3ec 52%,#b3c1e5 68%,#abbae2 79%,#afbee4 88%,#c2ceeb 100%)"></div><div class="abs" style="left:415.7px;top:440.6px;width:859px;height:103.0px;background:linear-gradient(180deg,#f8f8fc 0%,#eeeff8 13%,#dde2f2 32%,#c8d3ec 52%,#b3c1e5 68%,#abbae2 79%,#afbee4 88%,#c2ceeb 100%)"></div><div class="abs" style="left:415.7px;top:543.6px;width:859px;height:102.9px;background:linear-gradient(180deg,#f8f8fc 0%,#eeeff8 13%,#dde2f2 32%,#c8d3ec 52%,#b3c1e5 68%,#abbae2 79%,#afbee4 88%,#c2ceeb 100%)"></div><div class="abs" style="left:415.7px;top:646.5px;width:859px;height:74.1px;background:linear-gradient(180deg,#f8f8fc 0%,#eeeff8 13%,#dde2f2 32%,#c8d3ec 52%,#b3c1e5 68%,#abbae2 79%,#afbee4 88%,#c2ceeb 100%)"></div><div class="abs" style="left:701.3px;top:396.0px;width:1.4px;height:324.6px;background:rgba(255,255,255,.62)"></div><div class="abs" style="left:987.9px;top:396.0px;width:1.4px;height:324.6px;background:rgba(255,255,255,.62)"></div><div class="abs" style="left:415.7px;top:440.0px;width:859px;height:1.2px;background:rgba(255,255,255,.55)"></div><div class="abs" style="left:415.7px;top:543.0px;width:859px;height:1.2px;background:rgba(255,255,255,.55)"></div><div class="abs" style="left:415.7px;top:645.9px;width:859px;height:1.2px;background:rgba(255,255,255,.55)"></div><span class="t" style="left:424.1px;top:411.9px;font-size:14.5px;font-family:'Liberation Serif',serif;font-weight:700;color:#111;letter-spacing:0.099px;"><u>Сфера</u></span><span class="t" style="left:710.9px;top:411.9px;font-size:14.5px;font-family:'Liberation Serif',serif;font-weight:700;color:#111;letter-spacing:0.009px;">Знання (Інформація)</span><span class="t" style="left:997.4px;top:411.9px;font-size:14.5px;font-family:'Liberation Serif',serif;font-weight:700;color:#111;letter-spacing:0.016px;">Усвідомлення (Досвід)</span><span class="t" style="left:424.1px;top:485.2px;font-size:14.5px;font-family:'Liberation Serif',serif;font-weight:700;color:#111;transform:scaleX(1.0281);"><u>Харчування</u></span><span class="t" style="left:710.9px;top:476.4px;font-size:14.5px;font-family:'Liberation Serif',serif;color:#111;word-spacing:19.15px;">Розуміти, що переїдання викликає</span><span class="t" style="left:710.9px;top:496.3px;font-size:14.5px;font-family:'Liberation Serif',serif;color:#111;">важкість.</span><span class="t" style="left:997.4px;top:466.1px;font-size:14.5px;font-family:'Liberation Serif',serif;color:#111;word-spacing:19.58px;">Відчути фізичний дискомфорт від</span><span class="t" style="left:997.4px;top:486.1px;font-size:14.5px;font-family:'Liberation Serif',serif;color:#111;word-spacing:16.97px;">останнього зайвого шматка їжі в</span><span class="t" style="left:997.4px;top:505.9px;font-size:14.5px;font-family:'Liberation Serif',serif;color:#111;">реальному часі.</span><span class="t" style="left:424.1px;top:588.7px;font-size:14.5px;font-family:'Liberation Serif',serif;font-weight:700;color:#111;letter-spacing:0.033px;">Тайм-менеджмент</span><span class="t" style="left:710.9px;top:578.9px;font-size:14.5px;font-family:'Liberation Serif',serif;color:#111;word-spacing:8.82px;">Знати, <u>що</u> <u>гортання</u> <u>стрічки</u> <u>соцмереж</u></span><span class="t" style="left:710.9px;top:598.9px;font-size:14.5px;font-family:'Liberation Serif',serif;color:#111;"><u>забирає</u> 2 <u>години</u> на день.</span><span class="t" style="left:997.4px;top:569.0px;font-size:14.5px;font-family:'Liberation Serif',serif;color:#111;word-spacing:9.45px;">Побачити в кінці дня свою втому і</span><span class="t" style="left:997.4px;top:588.7px;font-size:14.5px;font-family:'Liberation Serif',serif;color:#111;word-spacing:1.35px;">зрозуміти, що ви витратили свій життєвий</span><span class="t" style="left:997.4px;top:608.4px;font-size:14.5px;font-family:'Liberation Serif',serif;color:#111;letter-spacing:-0.035px;">ресурс на пікселі замість відпочинку.</span><span class="t" style="left:424.1px;top:677.5px;font-size:14.5px;font-family:'Liberation Serif',serif;font-weight:700;color:#111;letter-spacing:0.054px;">Емпатія</span><span class="t" style="left:710.9px;top:677.5px;font-size:14.5px;font-family:'Liberation Serif',serif;color:#111;letter-spacing:-0.037px;">Знати, що людині поруч зараз боляче.</span><span class="t" style="left:997.4px;top:667.9px;font-size:14.5px;font-family:'Liberation Serif',serif;color:#111;word-spacing:-0.13px;"><u>Відчути</u> «клубок у <u>горлі</u>», коли <u>ви</u> дивитесь</span><span class="t" style="left:997.4px;top:687.7px;font-size:14.5px;font-family:'Liberation Serif',serif;color:#111;letter-spacing:-0.031px;"><u>їй</u> в <u>очі</u>, <u>розділяючи</u> <u>цей</u> смуток.</span><!-- ===== EDIT AREA EXTRAS, NOTES, STATUS BAR ===== -->
<div class="abs" style="left:1399.6px;top:228px;width:18.4px;height:509px;border-radius:0 0 9px 9px;background:#f6f5f8"></div><svg class="abs" style="left:1404px;top:231.6px" width="9.6" height="6.4" viewBox="0 0 9.6 6.4"><polygon points="0,6.4 4.8,0 9.6,6.4" fill="#6f6c6e" stroke="#6f6c6e" stroke-width="1" stroke-linejoin="round"/></svg><div class="abs" style="left:1404.7px;top:402px;width:8.4px;height:40px;border-radius:4.2px;background:#777476"></div><svg class="abs" style="left:1404px;top:725.6px" width="9.6" height="6.4" viewBox="0 0 9.6 6.4"><polygon points="0,0 4.8,6.4 9.6,0" fill="#6f6c6e" stroke="#6f6c6e" stroke-width="1" stroke-linejoin="round"/></svg><svg class="abs" style="left:1402px;top:739px" width="14" height="34" viewBox="0 0 14 34">
<path d="M7 1 L12 7.2 H2Z M7 7.6 L12 13.8 H2Z" fill="#6f6c6e" stroke="#6f6c6e" stroke-width="1" stroke-linejoin="round"/>
<path d="M7 33 L12 26.8 H2Z M7 26.4 L12 20.2 H2Z" fill="#6f6c6e" stroke="#6f6c6e" stroke-width="1" stroke-linejoin="round"/>
</svg><div class="abs" style="left:280px;top:795.4px;width:1138px;height:1px;background:#d6cfcf"></div><span class="t" style="left:290.4px;top:804.4px;font-size:15.2px;color:#565454;letter-spacing:0.039px;">Нотатки до слайда</span><div class="abs" style="left:1399.6px;top:797.5px;width:18.4px;height:33px;border-radius:9px 9px 0 0;background:#f6f5f8"></div><svg class="abs" style="left:1404.4px;top:802.2px" width="9" height="6" viewBox="0 0 9 6"><polygon points="0,6 4.5,0 9,6" fill="#6f6c6e" stroke="#6f6c6e" stroke-width="1" stroke-linejoin="round"/></svg><svg class="abs" style="left:1404.4px;top:818.6px" width="9" height="6" viewBox="0 0 9 6"><polygon points="0,0 4.5,6 9,0" fill="#6f6c6e" stroke="#6f6c6e" stroke-width="1" stroke-linejoin="round"/></svg><div class="abs" style="left:66px;top:829px;width:1352px;height:24px;background:linear-gradient(180deg,#d9d3d1 0,#d9d3d1 .8px,#fcfcfd 1.2px,#fcfcfd 2.6px,#f4f4f6 3.2px,#f4f4f6 21.6px,#fdfdfd 22px,#fdfdfd 100%)"></div><div class="abs" style="left:0;top:851.9px;width:1553px;height:1.1px;background:#0a0c0e"></div><span class="t" style="left:77.3px;top:835.9px;font-size:11.6px;color:#333;transform:scaleX(0.9309);">Слайд 5 з 12</span><svg class="abs" style="left:160px;top:833px" width="18" height="18" viewBox="0 0 18 18">
<path d="M8.5 4.5 Q8.4 2.7 6.6 2.7 H1.9 V14.3 H7 Q8.5 14.3 8.5 12.8 V11 M8.5 4.5 Q8.6 2.7 10.4 2.7 H14.3 V7.9 M8.5 4.5 V7.9" fill="none" stroke="#3a3a3a" stroke-width="1.3" stroke-linejoin="round"/>
<path d="M9.3 9.3 L15.8 15.8 M15.8 9.3 L9.3 15.8" stroke="#3a3a3a" stroke-width="1.25"/></svg><span class="t" style="left:193.8px;top:835.9px;font-size:11.6px;color:#333;transform:scaleX(0.9472);">англійська (Сполучені Штати)</span><svg class="abs" style="left:359px;top:832px" width="18" height="18" viewBox="0 0 18 18">
<circle cx="8" cy="4.6" r="1.75" fill="none" stroke="#2c2c2c" stroke-width="1.1"/>
<path d="M6.2 5.9 H3 Q1.3 5.9 1.4 7.2 Q1.6 8.5 3.4 8.7 Q5.2 8.9 5.4 10.4 Q5.6 12 4.6 14 Q3.8 16 5 16.5 Q6.2 16.8 6.8 15.2 L7.8 12.8 M9.8 5.9 H13 Q14.7 5.9 14.6 7.2 Q14.4 8.5 12.6 8.7 L9.8 9.7" fill="none" stroke="#2c2c2c" stroke-width="1.1" stroke-linecap="round" stroke-linejoin="round"/>
<circle cx="8" cy="12.8" r=".75" fill="#2c2c2c"/>
<path d="M9.3 10 L16.2 16.8 M16.2 10 L9.3 16.8" stroke="#2c2c2c" stroke-width="1.2"/></svg><span class="t" style="left:378.7px;top:835.9px;font-size:11.6px;font-weight:700;color:#222;transform:scaleX(0.9715);">Спеціальні можливості: щось не так</span><svg class="abs" style="left:961px;top:831px" width="20" height="20" viewBox="0 0 20 20">
<path d="M6.4 5.6 L9.8 2.4 L13.2 5.6" fill="none" stroke="#3a3a3a" stroke-width="1.1"/>
<path d="M1 8.6 H18.6 M1 12.4 H18.6 M1 16.2 H18.6" stroke="#3a3a3a" stroke-width="1.05"/></svg><span class="t" style="left:981.4px;top:835.9px;font-size:11.6px;color:#333;letter-spacing:-0.119px;">Нотатки</span><div class="abs" style="left:1043.2px;top:830.4px;width:41.6px;height:21.4px;background:#dcdadd"></div><svg class="abs" style="left:1055px;top:833px" width="18" height="16" viewBox="0 0 18 16">
<rect x="1.2" y="1.6" width="15.4" height="12.4" fill="none" stroke="#333" stroke-width="1.2"/>
<path d="M4.4 1.6 V14" stroke="#333" stroke-width="1.1"/><rect x="6.8" y="4.4" width="7.2" height="5.2" fill="none" stroke="#333" stroke-width="1.1"/><path d="M6.4 11.6 H14.4" stroke="#333" stroke-width="1"/></svg><svg class="abs" style="left:1097.6px;top:833.6px" width="17" height="15" viewBox="0 0 17 15">
<g fill="none" stroke="#333" stroke-width="1.15"><rect x="1.2" y="1.4" width="5.4" height="4.4"/><rect x="9.8" y="1.4" width="5.4" height="4.4"/><rect x="1.2" y="9" width="5.4" height="4.4"/><rect x="9.8" y="9" width="5.4" height="4.4"/></g></svg><svg class="abs" style="left:1139.6px;top:833px" width="17" height="16" viewBox="0 0 17 16">
<path d="M8.4 3.2 Q6 1.4 1.4 1.8 V13.2 Q6 12.8 8.4 14.4 Q10.8 12.8 15.4 13.2 V1.8 Q10.8 1.4 8.4 3.2 V14.2" fill="none" stroke="#333" stroke-width="1.1"/>
<path d="M3.4 4.8 H6.6 M3.4 7.2 H6.6 M3.4 9.6 H6.6 M10.2 4.8 H13.4 M10.2 7.2 H13.4 M10.2 9.6 H13.4" stroke="#333" stroke-width=".8"/></svg><svg class="abs" style="left:1182.6px;top:832.6px" width="15" height="17" viewBox="0 0 15 17">
<path d="M0.8 1.4 H13.8" stroke="#333" stroke-width="1.2"/><rect x="1.8" y="1.6" width="11" height="7.4" fill="none" stroke="#333" stroke-width="1.15"/><path d="M7.3 9 V15 M3.8 15.2 H10.8" stroke="#333" stroke-width="1.15"/></svg><div class="abs" style="left:1217.4px;top:841.2px;width:8.2px;height:1.1px;background:#3a3a3a"></div><div class="abs" style="left:1231.4px;top:841.2px;width:104px;height:1.1px;background:#5c5a5c"></div><div class="abs" style="left:1266px;top:835.4px;width:5.4px;height:11.8px;border-radius:1px;background:#5e5c5f"></div><div class="abs" style="left:1283px;top:838.8px;width:1px;height:6px;background:#5c5a5c"></div><div class="abs" style="left:1341.2px;top:841.2px;width:8.2px;height:1.1px;background:#3a3a3a"></div><div class="abs" style="left:1344.8px;top:837.6px;width:1.1px;height:8.2px;background:#3a3a3a"></div><span class="t" style="left:1361.4px;top:835.9px;font-size:11.6px;color:#333;transform:scaleX(0.9723);">73%</span><svg class="abs" style="left:1397px;top:833px" width="17" height="17" viewBox="0 0 17 17">
<rect x="5.2" y="4.8" width="6.4" height="7.4" rx=".8" fill="none" stroke="#333" stroke-width="1.15"/>
<path d="M6.2 3 L8.4 1 L10.6 3 M6.2 14 L8.4 16 L10.6 14 M3 6.4 L1 8.5 L3 10.6 M13.8 6.4 L15.8 8.5 L13.8 10.6" fill="none" stroke="#333" stroke-width="1.05"/></svg>
</div>
</body>
</html>
